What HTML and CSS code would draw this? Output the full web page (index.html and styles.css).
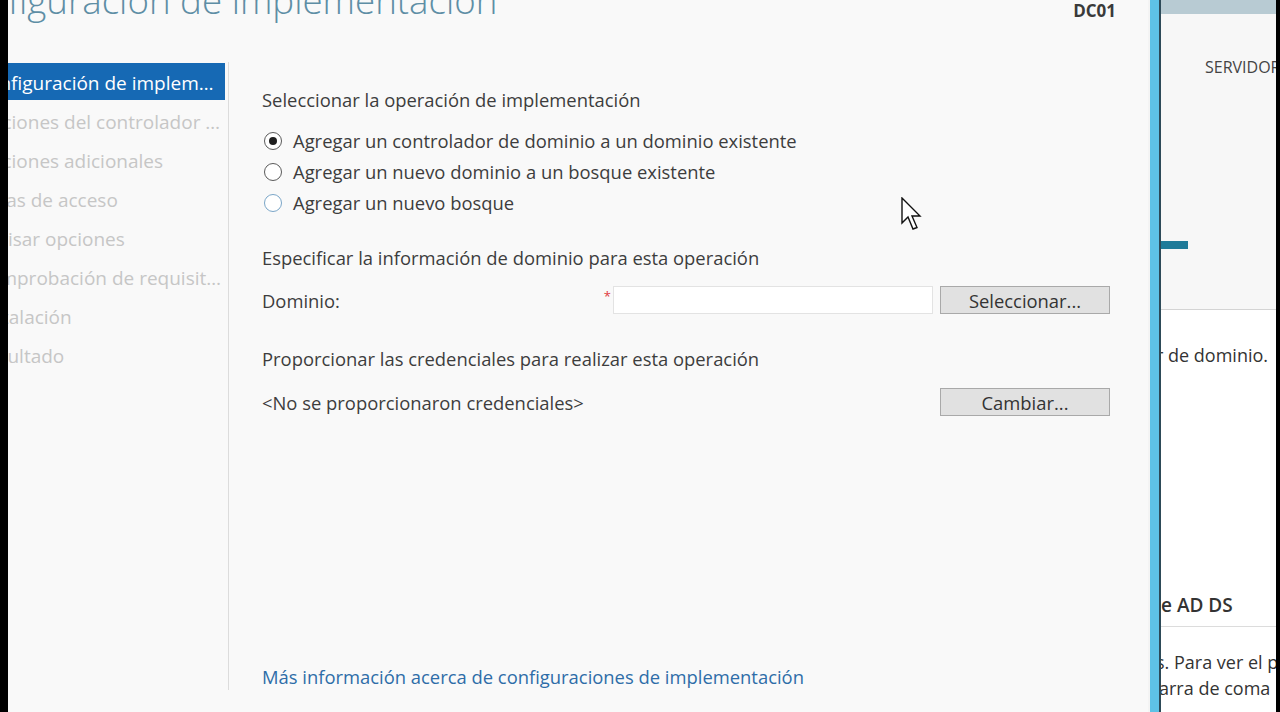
FILE: index.html
```html
<!DOCTYPE html>
<html lang="es">
<head>
<meta charset="utf-8">
<title>Configuración de implementación</title>
<link rel="stylesheet" href="styles.css">
</head>
<body>
<div class="screen">
  <div class="edge edge-left"></div>
  <div class="wizard">
    <header class="wiz-header">
      <div class="wiz-title"><span class="wiz-title-text">Configuración de implementación</span></div>
      <div class="wiz-server">DC01</div>
    </header>
    <div class="wiz-body">
      <nav class="wiz-nav">
        <ul class="nav-list">
          <li class="nav-item active">Configuración de implementación</li>
          <li class="nav-item">Opciones del controlador de dominio</li>
          <li class="nav-item">Opciones adicionales</li>
          <li class="nav-item">Rutas de acceso</li>
          <li class="nav-item">Revisar opciones</li>
          <li class="nav-item">Comprobación de requisitos previos</li>
          <li class="nav-item">Instalación</li>
          <li class="nav-item">Resultado</li>
        </ul>
      </nav>
      <main class="wiz-content">
        <p class="section-title first">Seleccionar la operación de implementación</p>
        <div class="radio-group">
          <label class="radio-row"><span class="radio checked"></span><span>Agregar un controlador de dominio a un dominio existente</span></label>
          <label class="radio-row"><span class="radio"></span><span>Agregar un nuevo dominio a un bosque existente</span></label>
          <label class="radio-row"><span class="radio hover"></span><span>Agregar un nuevo bosque</span></label>
        </div>
        <p class="section-title spec">Especificar la información de dominio para esta operación</p>
        <div class="field-row">
          <span class="field-label">Dominio:</span>
          <span class="required">*</span>
          <span class="text-input"></span>
          <span class="btn">Seleccionar...</span>
        </div>
        <p class="section-title cred">Proporcionar las credenciales para realizar esta operación</p>
        <div class="field-row cred-row">
          <span class="field-label">&lt;No se proporcionaron credenciales&gt;</span>
          <span class="btn">Cambiar...</span>
        </div>
        <a class="more-link" href="#">Más información acerca de configuraciones de implementación</a>
      </main>
    </div>
  </div>
  <div class="gap-strip"></div>
  <div class="blue-strip"></div>
  <div class="dark-strip"></div>
  <div class="bg-window">
    <div class="bg-header"></div>
    <div class="bg-top">
      <div class="bg-server">SERVIDOR</div>
      <div class="bg-bar"></div>
    </div>
    <div class="bg-bottom">
      <div class="bg-text dominio">r de dominio.</div>
      <div class="bg-heading">e AD DS</div>
      <div class="bg-lines">
        <div class="bg-text">s. Para ver el p</div>
        <div class="bg-text shift">barra de coma</div>
      </div>
    </div>
  </div>
  <div class="edge edge-right"></div>
  <svg class="cursor" width="22" height="36" viewBox="0 0 22 36">
    <path d="M1 1 L1 26 L7 20 L12 32 L16 30.5 L11 19 L19 19 Z" fill="#fff" stroke="#111" stroke-width="1.4" stroke-linejoin="miter"/>
  </svg>
</div>
</body>
</html>
```
FILE: styles.css
```css
* { box-sizing: border-box; }
html, body { margin: 0; padding: 0; }
body {
  width: 1280px;
  height: 712px;
  overflow: hidden;
  font-family: "Open Sans", "Noto Sans", sans-serif;
  background: #000;
}
.screen {
  position: relative;
  display: flex;
  width: 1280px;
  height: 712px;
}
.edge { background: #000; flex: none; }
.edge-left { width: 8px; }
.edge-right { width: 4px; }

.wizard {
  width: 1140px;
  flex: none;
  background: #f9f9f9;
  display: flex;
  flex-direction: column;
}
.wiz-header {
  height: 62px;
  flex: none;
  display: flex;
  justify-content: space-between;
  overflow: hidden;
}
.wiz-title {
  overflow: hidden;
  height: 62px;
}
.wiz-title-text {
  display: block;
  font-size: 36.7px;
  font-weight: 300;
  line-height: 38px;
  color: #5e8ea5;
  margin-top: -19px;
  margin-left: -66px;
  white-space: nowrap;
}
.wiz-server {
  font-size: 17px;
  font-weight: 700;
  color: #3a3a3a;
  line-height: 22px;
  padding-right: 32px;
}

.wiz-body {
  flex: 1;
  display: flex;
  padding-bottom: 22px;
}
.wiz-nav {
  width: 221px;
  flex: none;
  border-right: 1px solid #dcdcdc;
  overflow: hidden;
  padding-top: 1px;
}
.nav-list {
  list-style: none;
  margin: 0 3px 0 -40px;
  padding: 0;
}
.nav-item {
  height: 37px;
  line-height: 34px;
  padding-top: 3px;
  margin-bottom: 2px;
  font-size: 19px;
  color: #c6c6c6;
  white-space: nowrap;
  overflow: hidden;
  text-overflow: ellipsis;
  padding-left: 8px;
  padding-right: 2px;
}
.nav-item.active {
  background: #1669b4;
  color: #fff;
}

.wiz-content {
  flex: 1;
  display: flex;
  flex-direction: column;
  padding-left: 33px;
  color: #3d3d3d;
  font-size: 18.4px;
}
.section-title {
  margin: 0;
  line-height: 22px;
}
.section-title.first { margin-top: 27px; }
.radio-group {
  display: flex;
  flex-direction: column;
  margin-top: 14px;
}
.radio-row {
  display: flex;
  align-items: center;
  height: 31px;
  gap: 11px;
  padding-left: 2px;
}
.radio {
  width: 18px;
  height: 18px;
  border-radius: 50%;
  border: 1.5px solid #5a5a5a;
  background: #fff;
  display: flex;
  align-items: center;
  justify-content: center;
  flex: none;
}
.radio.checked::after {
  content: "";
  width: 8px;
  height: 8px;
  border-radius: 50%;
  background: #1e1e1e;
}
.radio.hover { border-color: #7aa6c8; }
.section-title.spec { margin-top: 29px; }
.field-row {
  display: flex;
  align-items: center;
  height: 28px;
  margin-top: 17px;
}
.field-label { flex: 1; }
.required {
  color: #e0393e;
  font-size: 13px;
  align-self: flex-start;
  line-height: 14px;
  margin-top: 3px;
  margin-right: 2px;
}
.text-input {
  width: 320px;
  height: 28px;
  background: #fff;
  border: 1px solid #e3e3e3;
  margin-right: 7px;
}
.btn {
  width: 170px;
  height: 28px;
  background: #e1e1e1;
  border: 1px solid #a9a9a9;
  display: flex;
  align-items: center;
  justify-content: center;
  font-size: 18.4px;
  color: #333;
  margin-right: 38px;
}
.section-title.cred { margin-top: 34px; }
.cred-row { margin-top: 18px; }
.more-link {
  margin-top: auto;
  margin-bottom: 2px;
  line-height: 22px;
  color: #2e6da8;
  text-decoration: none;
  font-size: 18.4px;
}

.gap-strip { width: 2px; background: #f4f4f4; flex: none; }
.blue-strip { width: 9px; background: #5ec2e6; flex: none; }
.dark-strip { width: 2px; background: #2d4a58; flex: none; }

.bg-window {
  flex: 1;
  display: flex;
  flex-direction: column;
  overflow: hidden;
  background: #fff;
  color: #333;
}
.bg-header { height: 14px; background: #b8cbd3; flex: none; }
.bg-top {
  height: 296px;
  flex: none;
  background: #f7f7f7;
  border-bottom: 1px solid #d4d4d4;
  display: flex;
  flex-direction: column;
}
.bg-server {
  font-size: 16px;
  line-height: 18px;
  margin-top: 44px;
  padding-left: 44px;
  color: #444;
  white-space: nowrap;
}
.bg-bar {
  width: 27px;
  height: 8px;
  background: #1f7b99;
  margin-top: 165px;
}
.bg-bottom {
  flex: 1;
  display: flex;
  flex-direction: column;
}
.bg-text {
  font-size: 18px;
  line-height: 26px;
  white-space: nowrap;
  margin-left: -5px;
}
.bg-text.shift { margin-left: -13px; }
.bg-text.dominio { margin-top: 32px; }
.bg-heading {
  font-size: 19px;
  font-weight: 600;
  line-height: 26px;
  margin-top: 224px;
  padding-bottom: 8px;
  border-bottom: 1px solid #dcdcdc;
  white-space: nowrap;
  margin-left: -4px;
  padding-left: 4px;
}
.bg-lines { margin-top: 22px; }

.cursor {
  position: absolute;
  left: 901px;
  top: 197px;
}
```
